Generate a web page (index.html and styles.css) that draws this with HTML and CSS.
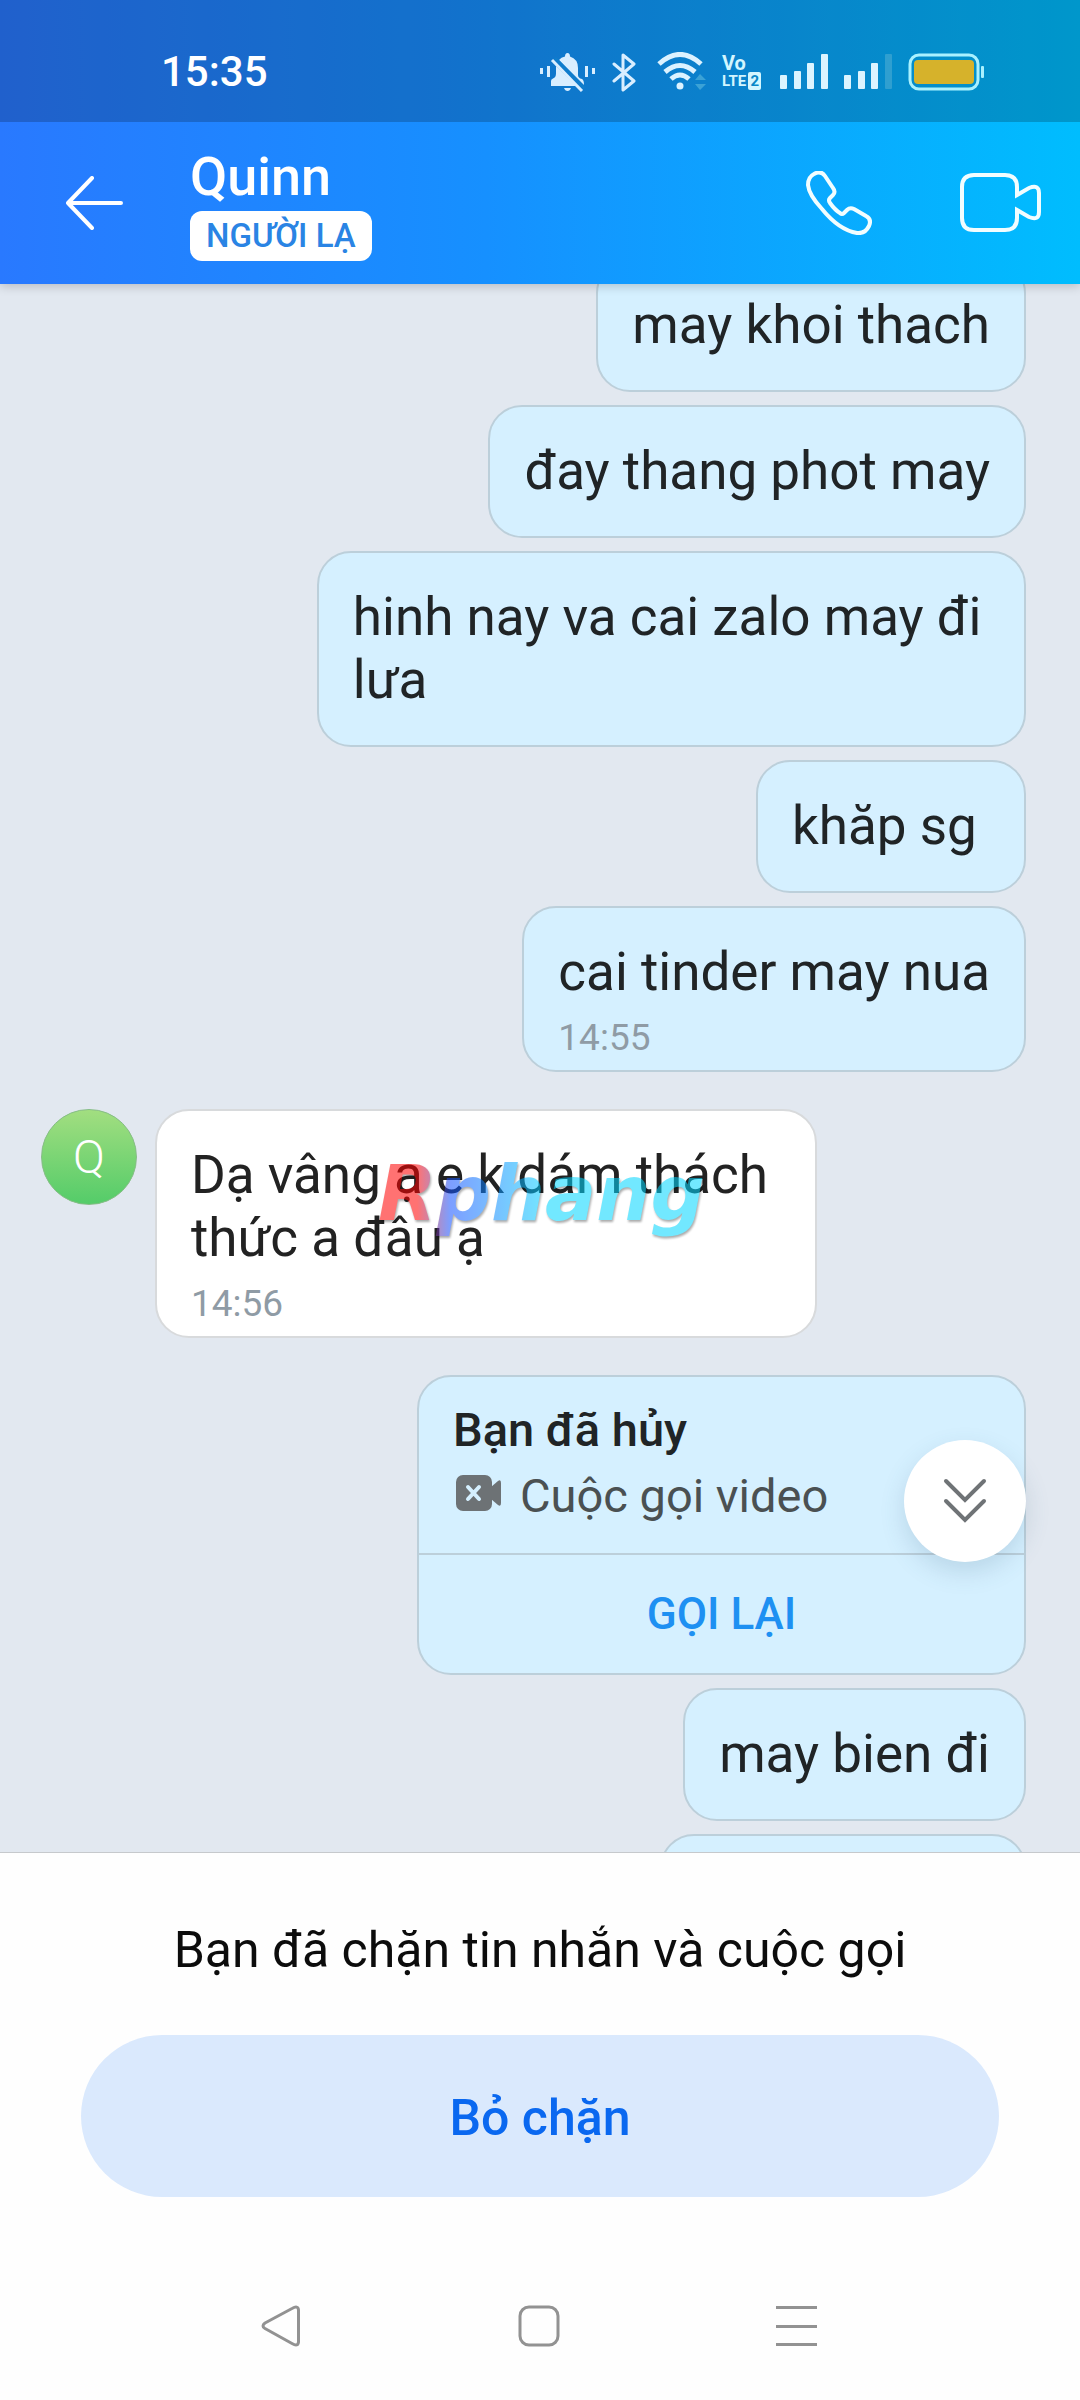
FILE: index.html
```html
<!DOCTYPE html>
<html lang="vi">
<head>
<meta charset="utf-8">
<meta name="viewport" content="width=device-width, initial-scale=1">
<title>Quinn</title>
<link rel="stylesheet" href="styles.css">
</head>
<body>
<div class="app">
  <div class="top">
    <div class="status">
      <span class="clock">15:35</span>
      <div class="status-icons">
        <svg width="56" height="40" viewBox="0 0 56 40" fill="#d9eeff" aria-hidden="true">
          <rect x="0" y="16" width="3" height="6"/><rect x="7" y="14" width="3" height="11"/>
          <rect x="45" y="14" width="3" height="11"/><rect x="52" y="16" width="3" height="6"/>
          <path d="M11 34v-5q0-2 2-2.500 3-1 3-5V14L36 34z"/>
          <path d="M19 8q2-3 6-3.500Q25 1 27.500 1T30 4.500Q38 7 38 16v7q0 3 4 4 2 1 2 6L19 8z"/>
          <path d="M24 36h7q-1 3-3.500 3T24 36z"/>
          <path d="M15 6l29 30" stroke="#0f7dcc" stroke-width="3"/>
          <path d="M12 8l30 31" stroke="#d9eeff" stroke-width="3"/>
        </svg>
        <svg width="28" height="40" viewBox="0 0 28 40" fill="none" stroke="#d9eeff" stroke-width="3" stroke-linejoin="round" stroke-linecap="round" aria-hidden="true">
          <path d="M2 12l20 17-11 9V3l11 9L2 29"/>
        </svg>
        <svg width="50" height="40" viewBox="0 0 50 40" aria-hidden="true">
          <g fill="none" stroke="#dcf2ff" stroke-width="5">
            <path d="M3 12Q24-7 45 12"/><path d="M9 20q15-13 30 0"/><path d="M15 27q9-8 18 0"/>
          </g>
          <circle cx="24" cy="34" r="3.500" fill="#dcf2ff"/>
          <path d="M39 28l5-6 6 6zM39 32h11l-6 6z" fill="#3ba2d6"/>
        </svg>
        <span class="volte"><span class="volte-top">Vo</span><span class="volte-row">LTE<span class="volte-sim">2</span></span></span>
        <svg width="48" height="40" viewBox="0 0 48 40" fill="#dcf4ff" aria-hidden="true">
          <rect x="0" y="23" width="7" height="14" rx="1"/><rect x="14" y="19" width="7" height="18" rx="1"/><rect x="27" y="11" width="7" height="26" rx="1"/><rect x="41" y="2" width="7" height="35" rx="1"/>
        </svg>
        <svg width="48" height="40" viewBox="0 0 48 40" fill="#dcf4ff" aria-hidden="true">
          <rect x="0" y="23" width="7" height="14" rx="1"/><rect x="14" y="19" width="7" height="18" rx="1"/><rect x="27" y="11" width="7" height="26" rx="1"/><rect x="41" y="2" width="7" height="35" rx="1" fill="#2f9fd0"/>
        </svg>
        <svg width="76" height="40" viewBox="0 0 76 40" aria-hidden="true">
          <rect x="2" y="3" width="68" height="34" rx="9" fill="none" stroke="#a9f1ff" stroke-width="3"/>
          <rect x="6" y="8" width="60" height="24" rx="4" fill="#d6b22b"/>
          <rect x="73" y="14" width="3" height="12" rx="1" fill="#a9f1ff"/>
        </svg>
      </div>
    </div>
    <header class="header">
      <button class="icon-btn back" aria-label="Quay lại">
        <svg width="58" height="54" viewBox="0 0 58 54" fill="none" stroke="#fff" stroke-width="4" stroke-linecap="round" stroke-linejoin="round"><path d="M26 2L2 27l24 25M2 27h53"/></svg>
      </button>
      <div class="contact">
        <h1 class="name">Quinn</h1>
        <span class="tag">NGƯỜI LẠ</span>
      </div>
      <div class="actions">
        <button class="icon-btn" aria-label="Gọi thoại">
          <svg width="66" height="64" viewBox="0 0 66 64" fill="none" stroke="#f2fdff" stroke-width="4" stroke-linejoin="round"><path d="M19 5l8 12q3 4 0 7l-3 3q-2 2 0 5 5 7 10 10 2 2 4 0l3-3q3-3 7-1l12 7q6 3 3 10-4 8-12 7-18-3-35-24Q3 24 2 14 2 6 8 3q7-4 11 2z"/></svg>
        </button>
        <button class="icon-btn" aria-label="Gọi video">
          <svg width="82" height="60" viewBox="0 0 82 60" fill="none" stroke="#f2fdff" stroke-width="4"><path d="M57 22V14Q57 2 45 2H14Q2 2 2 14V45Q2 57 14 57H45Q57 57 57 45V37L69 44Q79 48 79 39V20Q79 11 69 15Z"/></svg>
        </button>
      </div>
    </header>
  </div>

  <main class="chat">
    <div class="messages">
      <div class="bubble">may khoi thach</div>
      <div class="bubble">đay thang phot may</div>
      <div class="bubble">hinh nay va cai zalo may đi lưa</div>
      <div class="bubble">khăp sg&nbsp;</div>
      <div class="bubble timed">cai tinder may nua<time class="time">14:55</time></div>
      <div class="incoming">
        <div class="avatar">Q</div>
        <div class="bubble timed received">Dạ vâng ạ e k dám thách&nbsp;<br>thức a đâu ạ<time class="time">14:56</time></div>
      </div>
      <div class="call">
        <div class="call-info">
          <strong class="call-title">Bạn đã hủy</strong>
          <div class="call-type">
            <svg width="48" height="42" viewBox="0 0 48 42" aria-hidden="true"><rect x="1" width="36" height="36" rx="7" fill="#6d7275"/><path d="M36 12l7-6q3-2 3 2v20q0 4-3 2l-7-6z" fill="#6d7275"/><path d="M13 12l11 12M24 12L13 24" stroke="#d5f0ff" stroke-width="4" stroke-linecap="round"/></svg>
            <span>Cuộc gọi video</span>
          </div>
        </div>
        <button class="call-back">GỌI LẠI</button>
      </div>
      <div class="bubble">may bien đi</div>
      <div class="bubble next" aria-hidden="true"></div>
    </div>
    <span class="watermark">Rphang</span>
    <button class="to-bottom" aria-label="Xuống cuối">
      <svg width="44" height="46" viewBox="0 0 44 46" fill="none" stroke="#6f7376" stroke-width="4" stroke-linecap="round"><path d="M3 3l19 19L41 3M3 23l19 19 19-19"/></svg>
    </button>
  </main>

  <footer class="blocked">
    <p class="notice">Bạn đã chặn tin nhắn và cuộc gọi</p>
    <button class="unblock">Bỏ chặn</button>
  </footer>
  <nav class="nav">
    <button class="icon-btn" aria-label="Trở về"><svg width="42" height="42" viewBox="0 0 42 42" fill="none" stroke="#929292" stroke-width="3" stroke-linejoin="round"><path d="M32 3.500Q38 0 38.500 5V37Q38 42 32 38.500L5 23.500Q1 21 5 18Z"/></svg></button>
    <button class="icon-btn" aria-label="Màn hình chính"><svg width="42" height="42" viewBox="0 0 42 42" fill="none" stroke="#929292" stroke-width="3"><rect x="2" y="2" width="38" height="38" rx="9"/></svg></button>
    <button class="icon-btn" aria-label="Ứng dụng gần đây"><svg width="42" height="42" viewBox="0 0 42 42" fill="#929292"><rect y="1" width="41" height="3"/><rect y="20" width="41" height="3"/><rect y="38" width="41" height="3"/></svg></button>
  </nav>
</div>
</body>
</html>
```
FILE: styles.css
```css
* {
  box-sizing: border-box;
}

body {
  margin: 0;
  font-family: Roboto, "Noto Sans", sans-serif;
  color: #202426;
  background: #fefefe;
}

button {
  border: 0;
  padding: 0;
  font: inherit;
  color: inherit;
  background: none;
  cursor: pointer;
}

svg {
  display: block;
}

.app {
  display: flex;
  flex-direction: column;
  height: 100vh;
}

.top {
  position: relative;
  z-index: 1;
  color: #fff;
  background: linear-gradient(90deg, #2979ff, #1690ff 45%, #00bdfe);
  box-shadow: 0 2px 10px rgba(0, 0, 0, 0.2);
}

.status {
  display: flex;
  align-items: center;
  justify-content: space-between;
  height: 122px;
  padding: 22px 96px 0 161px;
  background: rgba(0, 0, 0, 0.2);
}

.clock {
  font-size: 42px;
  line-height: 50px;
  font-weight: 500;
}

.status-icons {
  display: flex;
  align-items: center;
  gap: 16px;
}

.volte {
  display: flex;
  flex-direction: column;
  width: 42px;
  font-weight: 700;
  color: #d3f6ff;
}

.volte-top {
  font-size: 20px;
  line-height: 18px;
}

.volte-row {
  display: flex;
  align-items: center;
  gap: 2px;
  font-size: 15px;
  line-height: 18px;
}

.volte-sim {
  width: 13px;
  border-radius: 2px;
  text-align: center;
  color: #0787c8;
  background: #d3f6ff;
}

.header {
  display: flex;
  align-items: center;
  height: 162px;
  padding: 0 38px 0 66px;
}

.back {
  margin-right: 66px;
}

.contact {
  display: flex;
  flex: 1;
  flex-direction: column;
  align-items: flex-start;
  gap: 3px;
}

.name {
  margin: 0;
  font-size: 54px;
  line-height: 63px;
  font-weight: 500;
}

.tag {
  padding: 0 16px;
  border-radius: 12px;
  font-size: 33px;
  line-height: 50px;
  font-weight: 500;
  color: #2a84e4;
  background: #fff;
}

.actions {
  display: flex;
  align-items: center;
  gap: 88px;
}

.chat {
  position: relative;
  flex: 1;
  min-height: 0;
  overflow: hidden;
  background: #e2e8f0;
}

/* The list is scrolled part-way through the first message. */
.messages {
  display: flex;
  flex-direction: column;
  align-items: flex-end;
  gap: 13px;
  margin-top: -25px;
  padding: 0 54px 0 41px;
}

.bubble {
  max-width: 72%;
  padding: 33px 34px;
  border: 2px solid #bccfda;
  border-radius: 34px;
  font-size: 53px;
  line-height: 63px;
  background: #d5f0ff;
}

.timed {
  padding-bottom: 10px;
}

.time {
  display: block;
  margin-top: 12px;
  font-size: 37px;
  line-height: 44px;
  color: #8f9ba5;
}

.next {
  width: 366px;
  height: 133px;
}

.incoming {
  display: flex;
  align-self: flex-start;
  gap: 18px;
  margin: 24px 0;
}

.avatar {
  width: 96px;
  height: 96px;
  border: 1px solid #86bd86;
  border-radius: 50%;
  font-size: 47px;
  line-height: 94px;
  font-weight: 300;
  text-align: center;
  color: #fff;
  background: linear-gradient(#a2de80, #54cc69);
}

.received {
  max-width: none;
  border-color: #d8dadc;
  color: #222;
  background: #fff;
}

.call {
  width: 609px;
  border: 2px solid #bccfda;
  border-radius: 34px;
  background: #d5f0ff;
}

.call-info {
  padding: 26px 34px 30px;
  border-bottom: 2px solid #bccfda;
}

.call-title {
  display: block;
  font-size: 47px;
  line-height: 54px;
  font-weight: 500;
}

.call-type {
  display: flex;
  align-items: center;
  gap: 17px;
  margin-top: 12px;
  padding-left: 2px;
  font-size: 47px;
  line-height: 54px;
  color: #4a5052;
}

.call-back {
  width: 100%;
  height: 118px;
  font-size: 44px;
  line-height: 50px;
  font-weight: 500;
  color: #1e90f2;
}

.watermark {
  position: absolute;
  top: 866px;
  left: 378px;
  font-family: "DejaVu Sans", sans-serif;
  font-size: 76px;
  line-height: 88px;
  font-weight: 700;
  font-style: italic;
  color: transparent;
  background: linear-gradient(90deg, #f00 12%, #1350ff 22%, #00d6ff 52%);
  background-clip: text;
  -webkit-background-clip: text;
  filter: drop-shadow(1px 2px 1px rgba(0, 0, 0, 0.6));
  opacity: 0.55;
  pointer-events: none;
}

.to-bottom {
  position: absolute;
  right: 54px;
  bottom: 290px;
  display: grid;
  place-items: center;
  width: 122px;
  height: 122px;
  border-radius: 50%;
  background: #fff;
  box-shadow: 0 10px 24px rgba(60, 100, 130, 0.18);
}

.blocked {
  padding: 68px 81px 54px;
  border-top: 1px solid #c6c9cc;
  text-align: center;
}

.notice {
  margin: 0 0 55px;
  font-size: 50px;
  line-height: 59px;
  color: #0c0c0c;
}

.unblock {
  width: 100%;
  height: 162px;
  padding-top: 4px;
  border-radius: 81px;
  font-size: 50px;
  font-weight: 500;
  color: #0a68f0;
  background: #dae9fd;
}

.nav {
  display: flex;
  justify-content: center;
  gap: 216px;
  padding: 54px 3px 53px 0;
}
```
